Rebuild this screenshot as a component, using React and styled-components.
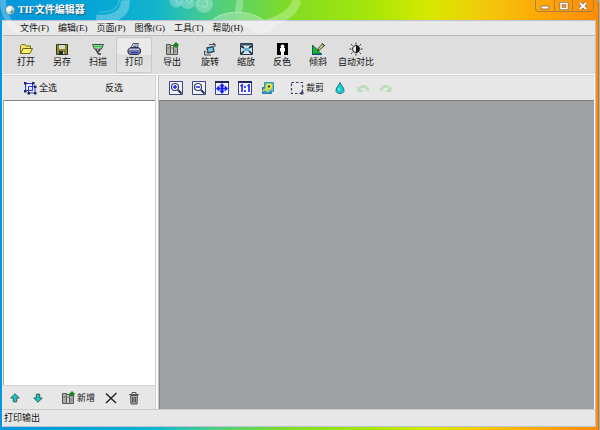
import React from 'react'
import styled, { createGlobalStyle } from 'styled-components'

const GlobalStyle = createGlobalStyle`
    * {
        box-sizing: border-box;
    }
    body {
        margin: 0;
        background: #a9b3b6;
        overflow: hidden;
    }
    body, button {
        font-family: "Liberation Serif", "Noto Sans CJK SC", sans-serif;
        font-size: 9px;
        line-height: 12px;
        color: #111;
    }
`

const Window = styled.main`
    position: relative;
    display: flex;
    flex-direction: column;
    height: 100vh;
    margin-right: 1px;
    padding: 0 2px 3px;
    border-right: 1px solid #c47a14;
    border-radius: 0 4px 0 0;
    background: linear-gradient(to right, #0795dc 0%, #05a6d6 16%, #12b5cc 26%, #4fce84 36%, #7fdc25 48%, #a6e60a 62%, #d8e800 72%, #f2c90a 81%, #fca909 90%, #ff8c08 100%);
`

const Swirl = styled.svg`
    position: absolute;
    left: 0;
    top: 0;
    width: 310px;
    height: 35px;
    pointer-events: none;
`

const TitleBar = styled.header`
    position: relative;
    z-index: 1;
    display: flex;
    align-items: center;
    height: 20px;
    flex-shrink: 0;
    padding: 0 2px 0 3px;
    gap: 3px;
`

const Title = styled.h1`
    flex: 1;
    margin: 0;
    font-size: 10px;
    line-height: 16px;
    font-weight: 700;
    color: #fff;
    text-shadow: 1px 1px 1px #245a78;
`

const WindowButtons = styled.div`
    display: flex;
    align-self: flex-start;
    height: 12px;
    border: 1px solid #b0803a;
    border-top: 0;
    border-radius: 0 0 4px 4px;
`

const WindowButton = styled.button`
    display: flex;
    align-items: center;
    justify-content: center;
    width: ${(props) => (props.$wide ? '21px' : '18px')};
    padding: 0;
    border: 0;
    border-left: ${(props) => (props.$first ? '0' : '1px solid #b0803a')};
    background: transparent;
`

const Client = styled.div`
    display: flex;
    flex-direction: column;
    flex: 1;
    min-height: 0;
    border: 1px solid #bac3d2;
    border-left-color: #e8ecef;
    background: #e7e7e7;
`

const MenuBar = styled.nav`
    display: flex;
    align-items: center;
    gap: 9px;
    height: 15px;
    flex-shrink: 0;
    padding-left: 17px;
    border-bottom: 1px solid #b9b9b9;
    background: #e8e8e8;
`

const MenuItem = styled.button`
    padding: 0;
    border: 0;
    background: transparent;
    white-space: nowrap;
`

const MainToolbar = styled.div`
    display: flex;
    align-items: center;
    height: 39px;
    flex-shrink: 0;
    padding-left: 5px;
    border-bottom: 1px solid #fafafa;
    background: #dedede;
`

const ToolGroup = styled.div`
    display: flex;
    margin-right: 2px;
`

const ToolButton = styled.button`
    display: flex;
    flex-direction: column;
    align-items: center;
    width: ${(props) => (props.$wide ? '40px' : '36px')};
    height: 36px;
    padding: 4px 0 0;
    border: 1px solid ${(props) => (props.$active ? '#cacaca' : 'transparent')};
    border-radius: 2px;
    background: ${(props) => (props.$active ? 'linear-gradient(#eaeaea 48%, #dcdcdc 50%, #e4e4e4)' : 'transparent')};
    white-space: nowrap;
`

const Workspace = styled.div`
    display: flex;
    flex: 1;
    min-height: 0;
    gap: 2px;
    padding-right: 1px;
    background: #f8f8f8;
`

const Sidebar = styled.aside`
    display: flex;
    flex-direction: column;
    width: 153px;
    flex-shrink: 0;
    border-right: 1px solid #d4d4d4;
`

const Editor = styled.section`
    display: flex;
    flex-direction: column;
    flex: 1;
    min-width: 0;
    border-left: 1px solid #c4c4c4;
`

const Bar = styled.div`
    display: flex;
    align-items: center;
    height: ${(props) => (props.$short ? '24px' : '25px')};
    flex-shrink: 0;
    gap: ${(props) => props.$gap || '0'};
    padding-left: ${(props) => props.$start || '0'};
    border-top: 1px solid #d4d4d4;
    background: #e7e7e7;
`

const BarButton = styled.button`
    display: flex;
    align-items: center;
    justify-content: center;
    gap: 2px;
    min-width: 14px;
    height: 18px;
    margin-left: ${(props) => props.$before || '0'};
    padding: 0;
    border: 0;
    background: transparent;
    white-space: nowrap;
`

const PageList = styled.div`
    flex: 1;
    border-top: 1px solid #85857f;
    border-left: 1px solid #aaa;
    background: #fff;
`

const Canvas = styled.div`
    flex: 1;
    border-top: 1px solid #7e7e7a;
    border-left: 1px solid #85858a;
    background: #a0a1a5;
`

const StatusBar = styled.footer`
    height: 17px;
    flex-shrink: 0;
    padding: 2px 1px;
    border-top: 1px solid #c9c9c9;
    background: #e7e7e7;
`

const Icon = ({ children, size = 14 }) => (
    <svg width={size} height={size} viewBox="0 0 14 14" fill="none" aria-hidden="true">
        {children}
    </svg>
)

const OpenIcon = () => (
    <Icon>
        <path d="M1.5 11.5V4l1.5-1.500h3l1 1.500h4.500v2.500" fill="#f3e56a" stroke="#77711a" />
        <path d="M1.5 11.5L4 6.500h9.500L11 11.500z" fill="#fff36e" stroke="#6b651a" />
    </Icon>
)

const SaveIcon = () => (
    <Icon>
        <path d="M1.5 2.5h11v10h-11z" fill="#8c8a22" stroke="#33351b" />
        <path d="M4 3h6v4H4z" fill="#d8d8cc" />
        <path d="M4 9h6v3.5H4z" fill="#252b2b" />
        <path d="M8 9.500h1.500V12H8z" fill="#ddd" />
    </Icon>
)

const ScanIcon = () => (
    <Icon>
        <path d="M1.5 2.5h11L10.500 7h-7z" fill="#f2f7f2" stroke="#444" />
        <path d="M3 4.500h8" stroke="#25c83c" strokeWidth="2" />
        <path d="M4.500 7L7.500 12h2.500M9.500 7L7 10" stroke="#333" strokeWidth="1.3" />
    </Icon>
)

const PrintIcon = () => (
    <Icon>
        <path d="M4 6l2-4.500h5.500L10 6z" fill="#fff" stroke="#555" />
        <path d="M6.500 3h3.500M6 4.500h3.500" stroke="#4b64bd" />
        <path d="M1 7.500L3.500 5.500h8L13.500 7v4L11 12.500H3L1 11z" fill="#767b9c" stroke="#30344d" />
        <path d="M2 7.500h10" stroke="#bdc3e3" />
        <path d="M4 10.500h7" stroke="#343aca" strokeWidth="1.500" />
    </Icon>
)

const ExportIcon = () => (
    <Icon>
        <path d="M1.500 2.500h4v10h-4z" fill="#a9adaa" stroke="#555" />
        <path d="M5.500 3.500h4v9h-4z" fill="#d6d3ac" stroke="#555" />
        <path d="M8.500 4.500h4v8h-4z" fill="#b5b9c3" stroke="#555" />
        <path d="M2.500 6h2M6.500 6h2M9.500 8h2M9.500 10h2" stroke="#606477" />
        <path d="M11 .5v5M8.500 3h5" stroke="#16851b" strokeWidth="2.400" />
    </Icon>
)

const RotateIcon = () => (
    <Icon>
        <path d="M4 6l6-1.500 1 5L5 11z" fill="#76c8df" stroke="#27465b" strokeWidth="1.300" />
        <path d="M6 2.500h6V5M12.500 2.500L10 1M8 13H1.500V9M1.500 9L3.500 10.500" stroke="#444" />
    </Icon>
)

const ResizeIcon = () => (
    <Icon>
        <path d="M1.500 1.500h12v11h-12z" fill="#cbe5ee" stroke="#27394a" />
        <path d="M1 2.500h13" stroke="#3b5361" strokeWidth="2" />
        <path d="M2 4l3 2M13 4l-3 2M2 12l3-3M13 12l-3-3" stroke="#17232e" strokeWidth="1.600" />
        <path d="M5 6h5v3H5z" fill="#5dafd3" />
    </Icon>
)

const InvertIcon = () => (
    <Icon>
        <path d="M2 1h11v12H2z" fill="#000" />
        <path d="M5.500 4.500a2 2 0 014 0L8.800 6h1.200v3.500H9V13H6V9.500H5V6h1.200z" fill="#fff" />
    </Icon>
)

const SkewIcon = () => (
    <Icon>
        <path d="M1.500 3v9h9z" fill="#18b53a" stroke="#176525" />
        <path d="M1 12.500h10" stroke="#1745a0" />
        <path d="M6.500 9l1-3 4-4 2 1.500L9 7.500z" fill="#e8dd7a" stroke="#333" />
        <path d="M10.500 1l3 3" stroke="#333" />
    </Icon>
)

const ContrastIcon = () => (
    <Icon>
        <circle cx="7" cy="7" r="3.500" fill="#eee" stroke="#222" />
        <path d="M7 3.500a3.500 3.500 0 010 7z" fill="#111" />
        <path d="M7 .5v2M7 11.500v2M.5 7h2M11.500 7h2M2 2l1.500 1.500M10.500 10.500L12 12M12 2l-1.500 1.500M3.500 10.500L2 12" stroke="#333" />
    </Icon>
)

const SelectAllIcon = () => (
    <Icon>
        <path d="M2.500 2.500h7v7h-7zM5.500 5.500h6.500v6.500H5.500z" stroke="#2939dc" />
        <path d="M1 1h2.500v2.500H1zM9 1h2.500v2.500H9zM1 9h2.500v2.500H1zM11 4.500h2.500V7H11zM4.500 11h2.500v2.500H4.500zM11 11h2.500v2.500H11z" fill="#202658" />
    </Icon>
)

const ZoomIcon = ({ plus }) => (
    <Icon>
        <path d="M.5.5h13v13H.5z" fill="#f0f2fb" stroke="#3b4285" />
        <circle cx="6" cy="6" r="3.500" fill="#fff" stroke="#34395f" strokeWidth="1.200" />
        <path d="M9 9l3.500 3.500" stroke="#293052" strokeWidth="2" />
        <path d={plus ? 'M4 6h4M6 4v4' : 'M4 6h4'} stroke="#1722ef" strokeWidth="1.500" />
    </Icon>
)

const FitIcon = () => (
    <Icon>
        <path d="M.5.5h13v13H.5z" fill="#f2f3ff" stroke="#3b4285" />
        <path d="M0 1h14" stroke="#202657" strokeWidth="2" />
        <path d="M7 3v9M2 7.500h10" stroke="#1722f5" strokeWidth="2" />
        <path d="M7 2L4 5.500h6zM7 13l-3-3.500h6zM1 7.500l3-3v6zM13 7.500l-3-3v6z" fill="#1722f5" />
    </Icon>
)

const ActualIcon = () => (
    <Icon>
        <path d="M.5.5h13v13H.5z" fill="#f5f6ff" stroke="#3b4285" />
        <path d="M0 1h14" stroke="#202657" strokeWidth="2" />
        <path d="M2.500 5L4 4v7M9.500 5L11 4v7M7 5v2M7 9v2" stroke="#1722f5" strokeWidth="1.600" />
    </Icon>
)

const PhotoIcon = () => (
    <Icon>
        <path d="M1.500 6.500h9v6h-9z" fill="#2d9ddb" stroke="#2875b5" />
        <path d="M3.500 1.500h9v9h-9z" fill="#67c5a9" stroke="#3b91b9" />
        <circle cx="8" cy="5.500" r="3" fill="#f3ea37" />
        <circle cx="8" cy="5.500" r="1.200" fill="#38482c" />
        <path d="M1.500 10l3-2 3 3" stroke="#eed545" strokeWidth="1.500" />
    </Icon>
)

const CropIcon = () => (
    <Icon>
        <path d="M1.500 1.500h11v11h-11z" stroke="#333870" strokeWidth="1.200" strokeDasharray="2.500 2" />
        <path d="M12 10v4M10 12h4" stroke="#222650" />
    </Icon>
)

const DropIcon = () => (
    <Icon>
        <path d="M7 1.500C6 4 3 6.500 3 9.500c0 4 8 4 8 0 0-3-3-5.500-4-8z" fill="#16c9d7" stroke="#237079" />
        <path d="M5 9l1.500-3v4z" fill="#b5fbfa" />
    </Icon>
)

const UndoIcon = ({ redo }) => (
    <Icon>
        <g transform={redo ? 'matrix(-1 0 0 1 14 0)' : undefined}>
            <path d="M4 7c3-3 7-2 8 3" stroke="#b9ddb9" strokeWidth="2.500" />
            <path d="M1.500 5v6H8z" fill="#b9ddb9" />
        </g>
    </Icon>
)

const ArrowIcon = ({ down }) => (
    <Icon size={12}>
        <path
            d={down ? 'M7 12L2 7h3V2.500h4V7h3z' : 'M7 2l5 5H9v4.500H5V7H2z'}
            fill="#19c8bf"
            stroke="#23504f"
        />
    </Icon>
)

const DeleteIcon = () => (
    <Icon>
        <path d="M2 2.500l10 9.500M12.500 2L2 12" stroke="#222" strokeWidth="1.400" />
    </Icon>
)

const TrashIcon = () => (
    <Icon>
        <path d="M3.500 4.500h7l-.5 8.500H4z" fill="#aaa" stroke="#555" />
        <path d="M2 3.500h10M5 3V1.500h4V3M5.500 6v5.500M7 6v5.500M8.500 6v5.500" stroke="#555" />
    </Icon>
)

const AppIcon = () => (
    <Icon size={10}>
        <circle cx="7" cy="7" r="6.500" fill="#c4dce0" stroke="#587f8b" />
        <path d="M2 6c2-5 6-5 8-3L7 5l2 3-4 1z" fill="#f7ffff" />
        <path d="M7 12l2-4 3-1c0 3-2 5-5 5z" fill="#3e947a" />
    </Icon>
)

const menus = ['文件(F)', '编辑(E)', '页面(P)', '图像(G)', '工具(T)', '帮助(H)']

const toolGroups = [
    [
        { label: '打开', icon: <OpenIcon /> },
        { label: '另存', icon: <SaveIcon /> },
        { label: '扫描', icon: <ScanIcon /> },
        { label: '打印', icon: <PrintIcon />, active: true },
    ],
    [{ label: '导出', icon: <ExportIcon /> }],
    [
        { label: '旋转', icon: <RotateIcon /> },
        { label: '缩放', icon: <ResizeIcon /> },
        { label: '反色', icon: <InvertIcon /> },
        { label: '倾斜', icon: <SkewIcon /> },
        { label: '自动对比', icon: <ContrastIcon />, wide: true },
    ],
]

const App = () => {
    return (
        <>
            <GlobalStyle />
            <Window>
                <TitleBar>
                    <AppIcon />
                    <Title>TIF文件编辑器</Title>
                    <WindowButtons>
                        <WindowButton $first aria-label="最小化">
                            <svg width="10" height="8">
                                <path d="M1 4h8v3H1z" fill="#fff" stroke="#9a7650" />
                            </svg>
                        </WindowButton>
                        <WindowButton aria-label="最大化">
                            <svg width="10" height="8">
                                <path d="M2 1.500h6v5H2z" fill="none" stroke="#8b7054" strokeWidth="3" />
                                <path d="M2 1.500h6v5H2z" fill="none" stroke="#fff" strokeWidth="1.500" />
                            </svg>
                        </WindowButton>
                        <WindowButton $wide aria-label="关闭">
                            <svg width="10" height="8">
                                <path d="M2 1l6 6M8 1L2 7" stroke="#806b5c" strokeWidth="3.500" />
                                <path d="M2 1l6 6M8 1L2 7" stroke="#fff" strokeWidth="2" />
                            </svg>
                        </WindowButton>
                    </WindowButtons>
                </TitleBar>
                <Client>
                    <MenuBar>
                        {menus.map((menu) => (
                            <MenuItem key={menu}>{menu}</MenuItem>
                        ))}
                    </MenuBar>
                    <MainToolbar>
                        {toolGroups.map((group) => (
                            <ToolGroup key={group[0].label}>
                                {group.map((tool) => (
                                    <ToolButton key={tool.label} $active={tool.active} $wide={tool.wide}>
                                        {tool.icon}
                                        {tool.label}
                                    </ToolButton>
                                ))}
                            </ToolGroup>
                        ))}
                    </MainToolbar>
                    <Workspace>
                        <Sidebar>
                            <Bar $start="20px" $gap="48px">
                                <BarButton><SelectAllIcon />全选</BarButton>
                                <BarButton>反选</BarButton>
                            </Bar>
                            <PageList />
                            <Bar $short $start="5px" $gap="9px">
                                <BarButton aria-label="上移"><ArrowIcon /></BarButton>
                                <BarButton aria-label="下移"><ArrowIcon down /></BarButton>
                                <BarButton $before="7px"><ExportIcon />新增</BarButton>
                                <BarButton aria-label="删除"><DeleteIcon /></BarButton>
                                <BarButton aria-label="清空"><TrashIcon /></BarButton>
                            </Bar>
                        </Sidebar>
                        <Editor>
                            <Bar $start="10px" $gap="9px">
                                <BarButton aria-label="放大"><ZoomIcon plus /></BarButton>
                                <BarButton aria-label="缩小"><ZoomIcon /></BarButton>
                                <BarButton aria-label="适合窗口"><FitIcon /></BarButton>
                                <BarButton aria-label="实际大小"><ActualIcon /></BarButton>
                                <BarButton aria-label="预览"><PhotoIcon /></BarButton>
                                <BarButton $before="6px"><CropIcon />裁剪</BarButton>
                                <BarButton aria-label="颜色"><DropIcon /></BarButton>
                                <BarButton aria-label="撤销"><UndoIcon /></BarButton>
                                <BarButton aria-label="重做"><UndoIcon redo /></BarButton>
                            </Bar>
                            <Canvas />
                        </Editor>
                    </Workspace>
                    <StatusBar>打印输出</StatusBar>
                </Client>
                <Swirl viewBox="0 0 310 35" fill="none" aria-hidden="true">
                    <g opacity=".28" stroke="#fff">
                        <path d="M3 0c0 14 6 26 20 34" strokeWidth="6" />
                        <path d="M125 0c2 13-11 21-29 19" strokeWidth="9" />
                        <path d="M119 0c0 9-9 13-20 12" strokeWidth="1" />
                        <path d="M170 0c0 7 7 9 11 5 4 5 9 4 13 1V0z" fill="#fff" strokeWidth="1" />
                        <circle cx="204" cy="4" r="8" fill="#fff" strokeWidth="2" />
                        <path d="M240 0c-1 7-1 12-3 18" strokeWidth="7" />
                        <path d="M297 0c-3 12-14 20-32 24" strokeWidth="9" />
                        <path d="M213 20c9-10 38-11 51 1l13 4c-6 7-13 9-21 9-5-7-22-14-43-14z" fill="#fff" stroke="none" />
                    </g>
                    <g opacity=".4" stroke="#fff">
                        <path d="M199 7c-4-5 2-10 7-7 4 4 0 9-4 6" />
                        <path d="M176 0c0 5 5 5 6 1M187 0c0 4 4 4 5 0" />
                        <path d="M213 20c9-10 38-11 51 1" />
                    </g>
                </Swirl>
            </Window>
        </>
    )
}

export default App
